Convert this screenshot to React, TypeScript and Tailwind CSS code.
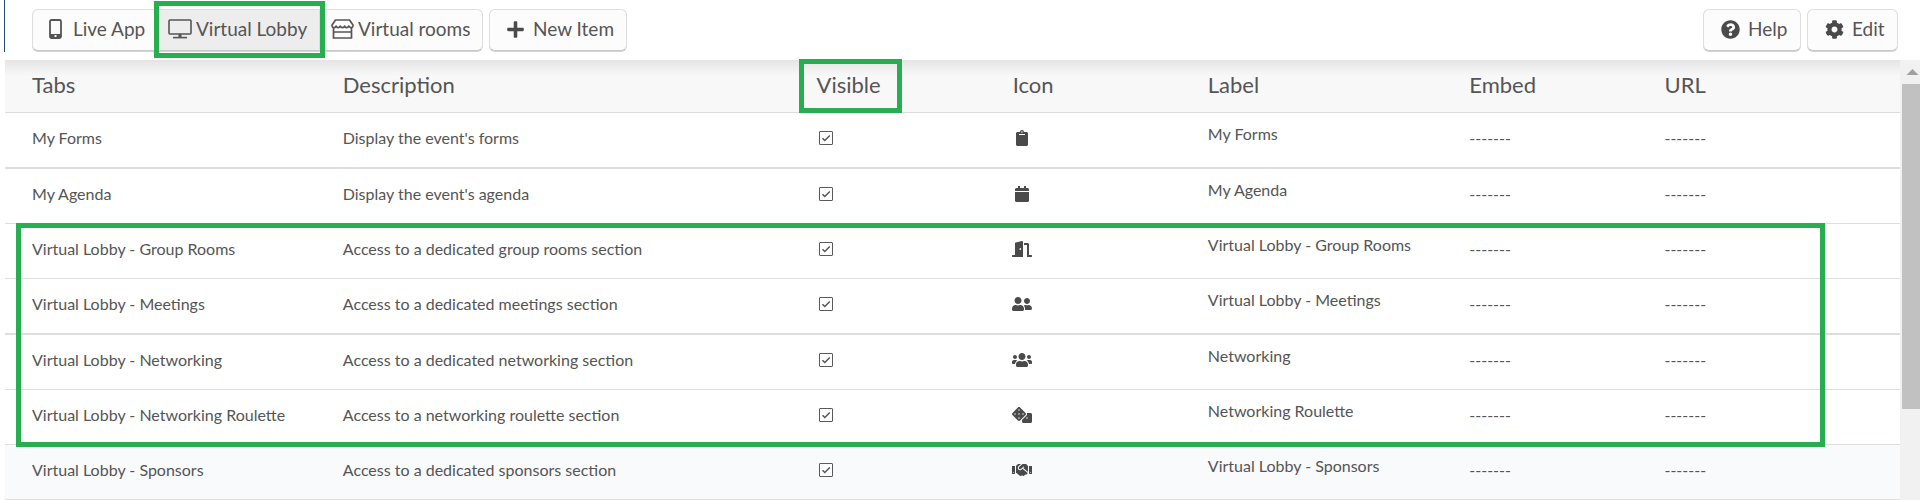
import type { IconType } from 'react-icons'
import {
  FaCalendar,
  FaClipboard,
  FaCog,
  FaDice,
  FaDoorOpen,
  FaHandshake,
  FaPlus,
  FaQuestionCircle,
  FaUserFriends,
  FaUsers,
} from 'react-icons/fa'

interface TabItem {
  name: string
  description: string
  label: string
  icon: IconType
  rowClass: string
}

const thinRow = 'h-[55px] [&>td]:border-b'
const thickRow = 'h-14 [&>td]:border-b-2'

const eventTabs: TabItem[] = [
  { name: 'My Forms', description: "Display the event's forms", label: 'My Forms', icon: FaClipboard, rowClass: thickRow },
  { name: 'My Agenda', description: "Display the event's agenda", label: 'My Agenda', icon: FaCalendar, rowClass: thinRow },
]

const lobbyTabs: TabItem[] = [
  { name: 'Virtual Lobby - Group Rooms', description: 'Access to a dedicated group rooms section', label: 'Virtual Lobby - Group Rooms', icon: FaDoorOpen, rowClass: thinRow },
  { name: 'Virtual Lobby - Meetings', description: 'Access to a dedicated meetings section', label: 'Virtual Lobby - Meetings', icon: FaUserFriends, rowClass: thickRow },
  { name: 'Virtual Lobby - Networking', description: 'Access to a dedicated networking section', label: 'Networking', icon: FaUsers, rowClass: thinRow },
  { name: 'Virtual Lobby - Networking Roulette', description: 'Access to a networking roulette section', label: 'Networking Roulette', icon: FaDice, rowClass: thinRow },
]

const sponsorTabs: TabItem[] = [
  { name: 'Virtual Lobby - Sponsors', description: 'Access to a dedicated sponsors section', label: 'Virtual Lobby - Sponsors', icon: FaHandshake, rowClass: `${thinRow} bg-[#f9fafc]` },
]

const buttonClass = 'flex h-[42px] items-center border border-[#dededf] border-b-[#c9c9ca] pb-0.5 shadow-[0_1px_0_#d4d4d5]'

function PhoneIcon() {
  return (
    <svg width="13" height="20" viewBox="0 0 13 20" aria-hidden="true">
      <rect x="1" y="1" width="11" height="18" rx="1.5" fill="none" stroke="currentColor" strokeWidth="1.8" />
      <path d="M1 15h11v4H1z" fill="currentColor" />
      <rect x="5.5" y="16" width="2" height="2" fill="#fff" />
    </svg>
  )
}

function DesktopIcon() {
  return (
    <svg width="24" height="20" viewBox="0 0 24 20" fill="none" stroke="currentColor" strokeWidth="1.6" aria-hidden="true">
      <rect x="1" y="1" width="22" height="14" rx="1" />
      <path d="M12 15v3.5" strokeWidth="3" />
      <path d="M5 18.600h14" />
    </svg>
  )
}

function StoreIcon() {
  return (
    <svg width="23" height="20" viewBox="0 0 23 20" fill="none" stroke="currentColor" strokeWidth="1.7" aria-hidden="true">
      <path d="M4.500 1h14l3.500 5c.3 3-3 3.600-4.200 1-.9 2.200-3.500 2.200-4.200 0-.8 2.200-3.600 2.200-4.300 0-.8 2.200-3.500 2.200-4.200 0C4 9.600.7 9 1 6z" strokeLinejoin="round" />
      <path d="M2.500 9v10h18V9M2.500 13h18" />
    </svg>
  )
}

function TabRow({ tab }: { tab: TabItem }) {
  const Icon = tab.icon

  return (
    <tr className={`[&>td]:border-[#dddede] ${tab.rowClass}`}>
      <td className="pb-1 pl-[27px]">{tab.name}</td>
      <td className="pb-1 pl-[27px]">{tab.description}</td>
      <td className="pb-1 pl-[29px]">
        <input
          type="checkbox"
          defaultChecked
          aria-label={`${tab.name} visible`}
          className="block size-[14px] appearance-none rounded-[1px] border border-[#5a5a5a] bg-white checked:bg-[url('data:image/svg+xml,%3Csvg%20xmlns=%22http://www.w3.org/2000/svg%22%20viewBox=%220%200%2012%2012%22%3E%3Cpath%20d=%22M2.500%206.200l2.300%202.300%205-5%22%20fill=%22none%22%20stroke=%22%23555%22%20stroke-width=%221.500%22/%3E%3C/svg%3E')]"
        />
      </td>
      <td className="pb-1 pl-[26px] text-[#4a4a4a]">
        <Icon className="h-4 w-5" />
      </td>
      <td className="pb-3 pl-[27px]">{tab.label}</td>
      <td className="pb-1 pl-[27px]">-------</td>
      <td className="pb-1 pl-[27px]">-------</td>
    </tr>
  )
}

export default function App() {
  return (
    <div className="bg-white font-['Lato',sans-serif] text-[#555]">
      <header className="relative flex h-[60px] justify-between bg-white pt-[9px] pr-[22px] pl-8 text-[19px] before:absolute before:top-0 before:left-1 before:h-[52px] before:w-px before:bg-[#1f4e79]">
        <nav className="flex" aria-label="App sections">
          <button className={`${buttonClass} w-[124px] gap-[11px] rounded-l-md bg-[#fcfcfc] pl-4`}>
            <PhoneIcon />
            Live App
          </button>
          <button className={`${buttonClass} relative z-10 w-[164px] gap-1 bg-[#ededed] pl-[11px] after:absolute after:-top-[9px] after:-right-[6px] after:-bottom-[8px] after:-left-[3px] after:border-[5px] after:border-[#28ae50]`}>
            <DesktopIcon />
            Virtual Lobby
          </button>
          <button className={`${buttonClass} w-[163px] gap-1 rounded-r-md bg-[#fcfcfc] pl-[10px]`}>
            <StoreIcon />
            Virtual rooms
          </button>
          <button className={`${buttonClass} ml-1.5 w-[138px] gap-2 rounded-md bg-[#fcfcfc] pl-4`}>
            <FaPlus className="text-[#4a4a4a]" />
            New Item
          </button>
        </nav>
        <div className="flex gap-1.5">
          <button className={`${buttonClass} w-[98px] gap-2 rounded-md bg-[#fcfcfc] pl-[17px]`}>
            <FaQuestionCircle className="text-[#4a4a4a]" />
            Help
          </button>
          <button className={`${buttonClass} w-[91px] gap-2 rounded-md bg-[#fcfcfc] pl-[17px]`}>
            <FaCog className="text-[#4a4a4a]" />
            Edit
          </button>
        </div>
      </header>

      <div className="flex">
        <main className="relative ml-[5px] grow">
          <div className="pointer-events-none absolute inset-x-0 top-0 h-4 bg-linear-to-b from-black/8 to-transparent" />
          <table className="w-full table-fixed border-separate border-spacing-0 text-left text-base">
            <thead className="bg-[#f8f8f8] text-[22px]">
              <tr className="h-[53px] [&>th]:border-b [&>th]:border-[#dcdcdc] [&>th]:pb-1 [&>th]:pl-[27px] [&>th]:font-normal">
                <th className="w-[16.4%]">Tabs</th>
                <th className="w-[25%]">Description</th>
                <th className="relative w-[10.35%] after:absolute after:-top-px after:left-[9px] after:h-[54px] after:w-[103px] after:border-[5px] after:border-[#28ae50]">Visible</th>
                <th className="w-[10.3%]">Icon</th>
                <th className="w-[13.8%]">Label</th>
                <th className="w-[10.3%]">Embed</th>
                <th>URL</th>
              </tr>
            </thead>
            <tbody>
              {eventTabs.map((tab) => <TabRow key={tab.name} tab={tab} />)}
            </tbody>
            <tbody className="relative after:pointer-events-none after:absolute after:-top-px after:right-[75px] after:-bottom-[2px] after:left-[11px] after:border-[5px] after:border-[#28ae50]">
              {lobbyTabs.map((tab) => <TabRow key={tab.name} tab={tab} />)}
            </tbody>
            <tbody>
              {sponsorTabs.map((tab) => <TabRow key={tab.name} tab={tab} />)}
            </tbody>
          </table>
        </main>

        {/* Scrollbar */}
        <div className="w-5 shrink-0 bg-[#f1f1f1] pl-0.5" aria-hidden="true">
          <svg className="h-6 w-[18px]" viewBox="0 0 18 24">
            <path d="M10.500 9l6 6h-12z" fill="#a0a0a0" />
          </svg>
          <div className="h-[325px] bg-[#c1c1c1]" />
        </div>
      </div>
    </div>
  )
}
